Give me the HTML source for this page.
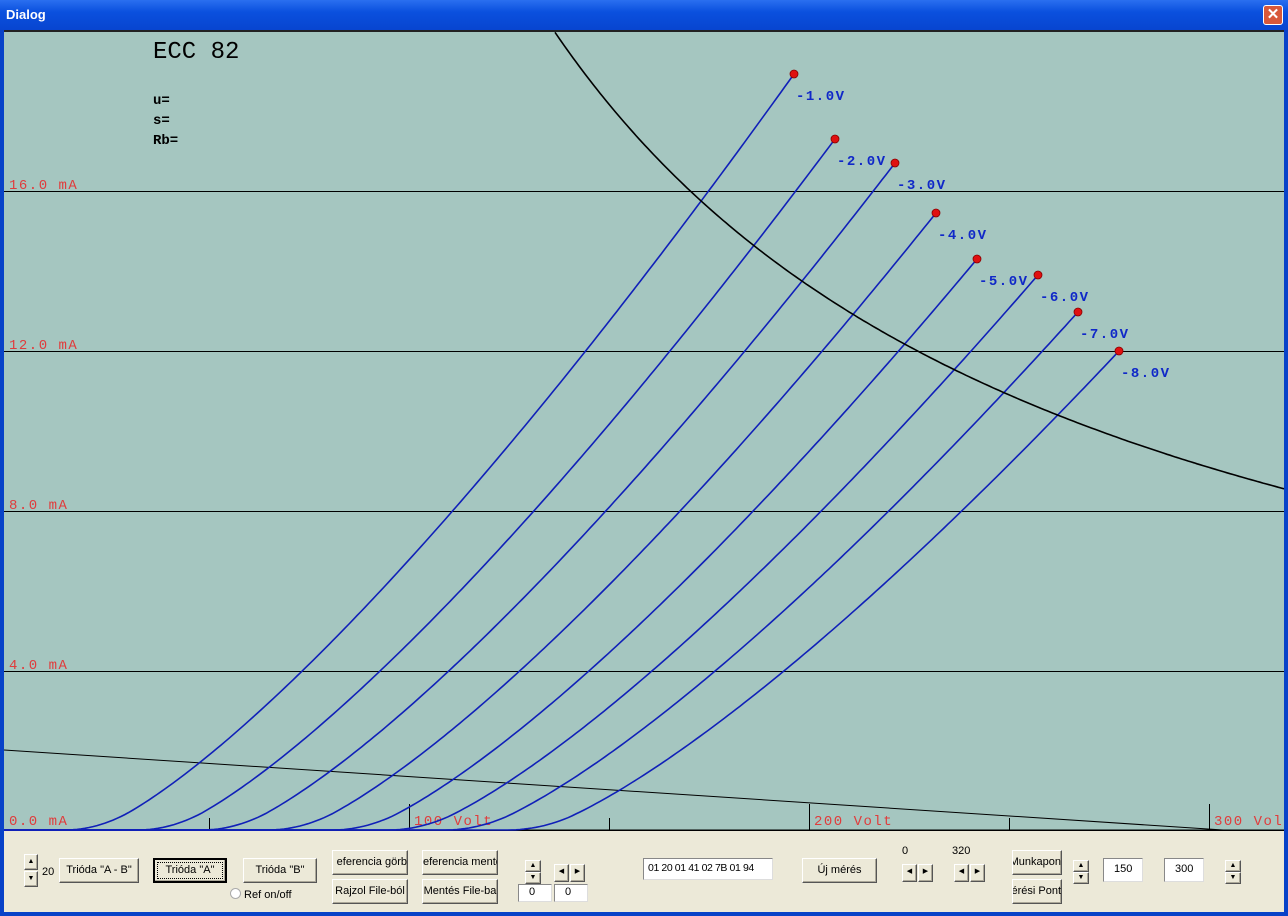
<!DOCTYPE html>
<html><head><meta charset="utf-8"><style>
html,body{margin:0;padding:0;width:1288px;height:916px;overflow:hidden;background:#0842c8;font-family:Tahoma,"Liberation Sans",sans-serif}
#title{position:absolute;left:0;top:0;width:1288px;height:30px;background:linear-gradient(#2a6ff0,#0a50de 40%,#0845d0);}
#title span{position:absolute;left:6px;top:7px;color:#fff;font-weight:bold;font-size:13px;font-family:"Liberation Sans",sans-serif}
#close{position:absolute;left:1263px;top:5px;width:20px;height:20px;background:#d8583a;border:1px solid #fff;border-radius:3px;box-sizing:border-box;color:#fff;font-size:15px;font-weight:bold;text-align:center;line-height:17px;font-family:"Liberation Sans",sans-serif}
#plot{position:absolute;left:4px;top:30px;width:1280px;height:801px;background:#a5c6c0;border-top:2px solid #222;box-sizing:border-box}
#panel{position:absolute;left:4px;top:831px;width:1280px;height:81px;background:#ece9d8}
.b{position:absolute;background:#ece9d8;border:1px solid #fff;border-right-color:#555;border-bottom-color:#555;box-shadow:inset -1px -1px #aca899;font-size:11px;text-align:center;box-sizing:border-box;white-space:nowrap;overflow:hidden;font-family:"Liberation Sans",sans-serif}
.t{position:absolute;font-size:11px;font-family:"Liberation Sans",sans-serif}
.e{position:absolute;background:#fff;border:1px solid #888;border-right-color:#ddd;border-bottom-color:#ddd;font-size:11px;box-sizing:border-box;padding:2px 4px;white-space:nowrap;overflow:hidden;font-family:"Liberation Sans",sans-serif}
.ar{font-size:7px;line-height:14px}
</style></head><body>
<div id="title"><span>Dialog</span><div id="close">✕</div></div>
<div id="plot"></div>
<svg id="sv" width="1288" height="916" style="position:absolute;left:0;top:0" font-family="Liberation Mono,monospace">
<g stroke="#000" stroke-width="1">
<line x1="4" y1="191.5" x2="1284" y2="191.5"/><line x1="4" y1="351.5" x2="1284" y2="351.5"/>
<line x1="4" y1="511.5" x2="1284" y2="511.5"/><line x1="4" y1="671.5" x2="1284" y2="671.5"/>
<line x1="209.5" y1="818" x2="209.5" y2="830"/><line x1="609.5" y1="818" x2="609.5" y2="830"/><line x1="1009.5" y1="818" x2="1009.5" y2="830"/>
<line x1="409.5" y1="804" x2="409.5" y2="830"/><line x1="809.5" y1="804" x2="809.5" y2="830"/><line x1="1209.5" y1="804" x2="1209.5" y2="830"/>
<line x1="4" y1="750" x2="1284" y2="834"/>
<line x1="4" y1="830.5" x2="1284" y2="830.5" stroke-width="2"/>
</g>
<g fill="#e03c3c" font-size="14" letter-spacing="1.5">
<text x="9" y="189">16.0 mA</text><text x="9" y="349">12.0 mA</text><text x="9" y="509">8.0 mA</text><text x="9" y="669">4.0 mA</text><text x="9" y="825">0.0 mA</text>
<text x="414" y="825">100 Volt</text><text x="814" y="825">200 Volt</text><text x="1214" y="825">300 Vol</text>
</g>
<g fill="#000" font-weight="bold">
<text x="153" y="58" font-size="24" font-weight="normal">ECC 82</text>
<text x="153" y="104" font-size="14">u=</text><text x="153" y="124" font-size="14">s=</text><text x="153" y="144" font-size="14">Rb=</text>
</g>
<g id="curves" fill="none" stroke="#1020b8" stroke-width="1.6"></g>
<path id="hyp" fill="none" stroke="#000" stroke-width="1.6"/>
<g id="dots" fill="#e01010" stroke="#800" stroke-width="0.8"></g>
<g id="labs" fill="#1028c8" font-size="14" font-weight="bold" letter-spacing="1.5"></g>
</svg>
<div id="panel">
<div class="b ar" style="left:20px;top:23px;width:14px;height:16px">▲</div>
<div class="b ar" style="left:20px;top:40px;width:14px;height:16px">▼</div>
<div class="t" style="left:38px;top:35px">20</div>
<div class="b" style="left:55px;top:27px;width:80px;height:25px;line-height:22px">Trióda "A - B"</div>
<div class="b" style="left:149px;top:27px;width:74px;height:25px;line-height:21px;border:2px solid #000;outline:1px dotted #000;outline-offset:-5px">Trióda  "A"</div>
<div class="b" style="left:239px;top:27px;width:74px;height:25px;line-height:22px">Trióda  "B"</div>
<div class="t" style="left:226px;top:57px"><span style="display:inline-block;width:9px;height:9px;border:1px solid #aaa;border-radius:50%;background:#fff;vertical-align:-1px"></span>  Ref on/off</div>
<div class="b" style="left:328px;top:19px;width:76px;height:25px;line-height:22px;text-align:right">eferencia görb</div>
<div class="b" style="left:328px;top:48px;width:76px;height:25px;line-height:22px">Rajzol File-ból</div>
<div class="b" style="left:418px;top:19px;width:76px;height:25px;line-height:22px;text-align:left">eferencia mentés</div>
<div class="b" style="left:418px;top:48px;width:76px;height:25px;line-height:22px">Mentés File-ba</div>
<div class="b ar" style="left:521px;top:29px;width:16px;height:12px;line-height:10px">▲</div>
<div class="b ar" style="left:521px;top:41px;width:16px;height:12px;line-height:10px">▼</div>
<div class="b ar" style="left:550px;top:33px;width:15px;height:18px">◀</div>
<div class="b ar" style="left:566px;top:33px;width:15px;height:18px">▶</div>
<div class="e" style="left:514px;top:53px;width:34px;height:18px;padding:1px 10px">0</div>
<div class="e" style="left:550px;top:53px;width:34px;height:18px;padding:1px 10px">0</div>
<div class="e" style="left:639px;top:27px;width:130px;height:22px;letter-spacing:-0.4px;font-size:10.5px;padding:3px 4px">01 20 01 41 02 7B 01 94</div>
<div class="b" style="left:798px;top:27px;width:75px;height:25px;line-height:22px">Új mérés</div>
<div class="t" style="left:898px;top:14px">0</div><div class="t" style="left:948px;top:14px">320</div>
<div class="b ar" style="left:898px;top:33px;width:15px;height:18px">◀</div>
<div class="b ar" style="left:914px;top:33px;width:15px;height:18px">▶</div>
<div class="b ar" style="left:950px;top:33px;width:15px;height:18px">◀</div>
<div class="b ar" style="left:966px;top:33px;width:15px;height:18px">▶</div>
<div class="b" style="left:1008px;top:19px;width:50px;height:25px;line-height:22px;text-align:right;direction:rtl">Munkapon</div>
<div class="b" style="left:1008px;top:48px;width:50px;height:25px;line-height:22px;text-align:right;direction:rtl">érési Pont</div>
<div class="b ar" style="left:1069px;top:29px;width:16px;height:12px;line-height:10px">▲</div>
<div class="b ar" style="left:1069px;top:41px;width:16px;height:12px;line-height:10px">▼</div>
<div class="e" style="left:1099px;top:27px;width:40px;height:24px;padding:4px 10px">150</div>
<div class="e" style="left:1160px;top:27px;width:40px;height:24px;padding:4px 10px">300</div>
<div class="b ar" style="left:1221px;top:29px;width:16px;height:12px;line-height:10px">▲</div>
<div class="b ar" style="left:1221px;top:41px;width:16px;height:12px;line-height:10px">▼</div>
</div>
<script>
var ns="http://www.w3.org/2000/svg";
var C=[[90,794,74,"-1.0V"],[163,835,139,"-2.0V"],[227,895,163,"-3.0V"],[293,936,213,"-4.0V"],[357,977,259,"-5.0V"],[413,1038,275,"-6.0V"],[470,1078,312,"-7.0V"],[533,1119,351,"-8.0V"]];
var g=document.getElementById("curves"),d=document.getElementById("dots"),l=document.getElementById("labs");
C.forEach(function(c){var x0=c[0]-25;var p="M4 830 L"+x0+" 830";for(var x=x0;x<=c[1];x+=4){var t=(x-c[0])/(c[1]-c[0]);var y;
if(t<0.06){var s=(x-x0)/(c[0]+0.06*(c[1]-c[0])-x0);y=830-(830-c[2])*Math.pow(0.06,1.3)*s*s;}else y=830-(830-c[2])*Math.pow(t,1.3);
p+=" L"+x+" "+y.toFixed(1);}p+=" L"+c[1]+" "+c[2];
var e=document.createElementNS(ns,"path");e.setAttribute("d",p);g.appendChild(e);
var o=document.createElementNS(ns,"circle");o.setAttribute("cx",c[1]);o.setAttribute("cy",c[2]);o.setAttribute("r",4);d.appendChild(o);
var tx=document.createElementNS(ns,"text");tx.setAttribute("x",c[1]+2);tx.setAttribute("y",c[2]+26);tx.textContent=c[3];l.appendChild(tx);});
var p="";for(var x=555;x<=1286;x+=3){var V=(x-10)/4;var I=2717/V;var y=830-I*40;p+=(p?" L":"M")+x+" "+y.toFixed(1);}
document.getElementById("hyp").setAttribute("d",p);
</script>
</body></html>
